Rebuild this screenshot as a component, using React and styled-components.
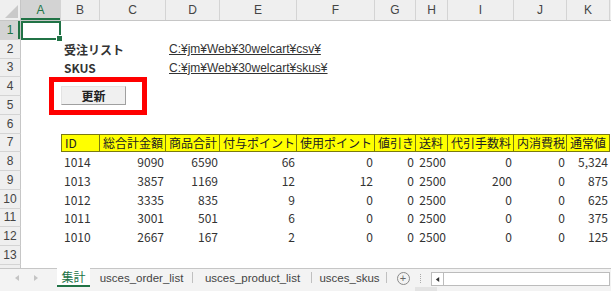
import styled, { createGlobalStyle } from "styled-components";

const COLS = [40, 39, 66, 54, 77, 78, 41, 32, 66, 53, 43];
const LETTERS = "ABCDEFGHIJK".split("");
const ROW_H = 18.75;
const TEMPLATE = `21px ${COLS.map((c) => c + "px").join(" ")} 1fr`;

const HEADERS = ["ID", "総合計金額", "商品合計", "付与ポイント", "使用ポイント", "値引き", "送料", "代引手数料", "内消費税", "通常値"];
const DATA = [
  ["1014", "9090", "6590", "66", "0", "0", "2500", "0", "0", "5,324"],
  ["1013", "3857", "1169", "12", "12", "0", "2500", "200", "0", "875"],
  ["1012", "3335", "835", "9", "0", "0", "2500", "0", "0", "625"],
  ["1011", "3001", "501", "6", "0", "0", "2500", "0", "0", "375"],
  ["1010", "2667", "167", "2", "0", "0", "2500", "0", "0", "125"],
];

const GlobalStyle = createGlobalStyle`
  html, body { margin: 0; padding: 0; background: #fff; }
  body {
    width: 611px;
    height: 291px;
    overflow: hidden;
    font-family: "Noto Sans CJK JP", "Noto Sans", sans-serif;
  }
`;

const Window = styled.div`
  display: flex;
  flex-direction: column;
  width: 611px;
  height: 291px;
  overflow: hidden;
`;

const Sheet = styled.div`
  position: relative;
  height: 268px;
  overflow: hidden;
`;

const ColHeaderRow = styled.div`
  display: grid;
  grid-template-columns: ${TEMPLATE};
  height: 21px;
  background: #efefef;
  border-bottom: 1px solid #c6c6c6;
  box-sizing: border-box;
`;

const Corner = styled.div`
  position: relative;
  background: #efefef;
  border-right: 1px solid #c6c6c6;
  &::after {
    content: "";
    position: absolute;
    right: 2px;
    bottom: 2px;
    border-left: 13px solid transparent;
    border-bottom: 13px solid #c9c9c9;
  }
`;

const ColLetter = styled.div`
  display: flex;
  align-items: center;
  justify-content: center;
  font-family: "Liberation Sans", sans-serif;
  font-size: 12px;
  color: ${(p) => (p.$active ? "#217346" : "#444")};
  background: ${(p) => (p.$active ? "#d3d3d3" : "transparent")};
  border-right: 1px solid #d4d4d4;
  box-shadow: ${(p) => (p.$active ? "inset 0 -2px 0 #217346" : "none")};
`;

const Row = styled.div`
  display: grid;
  grid-template-columns: ${TEMPLATE};
  height: ${ROW_H}px;
`;

const RowNum = styled.div`
  display: flex;
  align-items: center;
  justify-content: center;
  font-family: "Liberation Sans", sans-serif;
  font-size: 12px;
  color: ${(p) => (p.$active ? "#217346" : "#444")};
  background: ${(p) => (p.$active ? "#d3d3d3" : "#efefef")};
  border-bottom: 1px solid #d4d4d4;
  border-right: 1px solid #c6c6c6;
  box-shadow: ${(p) => (p.$active ? "inset -2px 0 0 #217346" : "none")};
  box-sizing: border-box;
`;

const Cell = styled.div`
  position: relative;
  display: flex;
  align-items: center;
  justify-content: ${(p) => (p.$right ? "flex-end" : "flex-start")};
  padding: 0 2px 0 3px;
  font-size: 12px;
  color: #333;
  white-space: nowrap;
  overflow: visible;
  font-weight: ${(p) => (p.$bold ? 700 : 400)};
  box-sizing: border-box;
`;

const SelectedCell = styled(Cell)`
  border: 2px solid #217346;
  &::after {
    content: "";
    position: absolute;
    right: -4px;
    bottom: -4px;
    width: 5px;
    height: 5px;
    background: #217346;
    border: 1px solid #fff;
  }
`;

const HeadCell = styled(Cell)`
  background: #ffff00;
  color: #222;
  border-top: 1px solid #7a7a10;
  border-bottom: 1px solid #7a7a10;
  border-right: 1px solid #7a7a10;
  border-left: ${(p) => (p.$first ? "1px solid #7a7a10" : "none")};
  overflow: hidden;
`;

const PathLink = styled.span`
  color: #333;
  text-decoration: underline;
  font-family: "Liberation Sans", "Noto Sans CJK JP", sans-serif;
  font-size: 12px;
`;

const FormButton = styled.div`
  position: absolute;
  left: 61px;
  top: 86px;
  width: 65px;
  height: 19px;
  box-sizing: border-box;
  display: flex;
  align-items: center;
  justify-content: center;
  background: #f0f0f0;
  border: 1px solid #e3e3e3;
  border-right-color: #a0a0a0;
  border-bottom-color: #a0a0a0;
  font-size: 12px;
  font-weight: 700;
  color: #222;
`;

const Highlight = styled.div`
  position: absolute;
  left: 49px;
  top: 77px;
  width: 98px;
  height: 38px;
  box-sizing: border-box;
  border: 5px solid #ff0000;
`;

const TabBar = styled.div`
  display: flex;
  align-items: stretch;
  height: 19px;
  background: #f3f3f3;
  border-top: 1px solid #c6c6c6;
  box-sizing: border-box;
`;

const NavArrows = styled.div`
  display: flex;
  align-items: center;
  gap: 13px;
  width: 57px;
  padding-left: 14px;
  box-sizing: border-box;
`;

const Tab = styled.div`
  display: flex;
  align-items: center;
  justify-content: center;
  width: ${(p) => p.$w}px;
  margin-top: -1px;
  font-family: ${(p) => (p.$active ? '"Noto Sans CJK JP", sans-serif' : '"Liberation Sans", sans-serif')};
  font-size: ${(p) => (p.$active ? 12 : 11.5)}px;
  color: ${(p) => (p.$active ? "#217346" : "#444")};
  background: ${(p) => (p.$active ? "#fff" : "transparent")};
  border-bottom: ${(p) => (p.$active ? "2px solid #217346" : "none")};
  box-sizing: border-box;
  position: relative;
  &::after {
    content: "";
    display: ${(p) => (p.$sep ? "block" : "none")};
    position: absolute;
    right: 0;
    top: 4px;
    height: 11px;
    border-right: 1px solid #c0c0c0;
  }
`;

const AddSheet = styled.div`
  display: flex;
  align-items: center;
  justify-content: center;
  width: 44px;
  gap: 10px;
`;

const Plus = styled.div`
  width: 11px;
  height: 11px;
  border: 1px solid #8a8a8a;
  border-radius: 50%;
  display: flex;
  align-items: center;
  justify-content: center;
  font-family: "Liberation Sans", sans-serif;
  font-size: 11px;
  line-height: 1;
  color: #666;
`;

const Dots = styled.div`
  width: 1px;
  height: 9px;
  border-left: 1px dotted #aaa;
`;

const HScroll = styled.div`
  flex: 1;
  display: flex;
  margin: 3px 1px 1px 0;
  border: 1px solid #bcbcbc;
  background: #fff;
`;

const ScrollBtn = styled.div`
  width: 11px;
  display: flex;
  align-items: center;
  justify-content: center;
  border-right: 1px solid #bcbcbc;
`;

const StatusStrip = styled.div`
  flex: 1;
  display: flex;
  background: #f3f3f3;
`;

const StripBlock = styled.div`
  margin-left: 415px;
  width: 22px;
  background: #e3e3e3;
`;

function Arrow({ dir = "left", color = "#c4c4c4", size = 6 }) {
  const d = dir === "left" ? "M5 0 L5 6 L1 3 Z" : "M1 0 L1 6 L5 3 Z";
  return (
    <svg width={size} height={size} viewBox="0 0 6 6">
      <path d={d} fill={color} />
    </svg>
  );
}

function DataRow({ n, children, active }) {
  return (
    <Row>
      <RowNum $active={active}>{n}</RowNum>
      {children}
    </Row>
  );
}

export default function App() {
  return (
    <Window>
      <GlobalStyle />
      <Sheet>
        <ColHeaderRow>
          <Corner />
          {LETTERS.map((l) => (
            <ColLetter key={l} $active={l === "A"}>{l}</ColLetter>
          ))}
        </ColHeaderRow>
        <DataRow n={1} active>
          <SelectedCell />
        </DataRow>
        <DataRow n={2}>
          <Cell />
          <Cell $bold>受注リスト</Cell>
          <Cell />
          <Cell><PathLink>C:¥jm¥Web¥30welcart¥csv¥</PathLink></Cell>
        </DataRow>
        <DataRow n={3}>
          <Cell />
          <Cell $bold>SKUS</Cell>
          <Cell />
          <Cell><PathLink>C:¥jm¥Web¥30welcart¥skus¥</PathLink></Cell>
        </DataRow>
        <DataRow n={4} />
        <DataRow n={5} />
        <DataRow n={6} />
        <DataRow n={7}>
          <Cell />
          {HEADERS.map((h, i) => (
            <HeadCell key={h} $first={i === 0}>{h}</HeadCell>
          ))}
        </DataRow>
        {DATA.map((r, ri) => (
          <DataRow key={r[0]} n={8 + ri}>
            <Cell />
            {r.map((v, i) => (
              <Cell key={i} $right={i > 0}>{v}</Cell>
            ))}
          </DataRow>
        ))}
        <DataRow n={13} />
        <DataRow n={14} />
        <FormButton>更新</FormButton>
        <Highlight />
      </Sheet>
      <TabBar>
        <NavArrows>
          <Arrow dir="left" />
          <Arrow dir="right" />
        </NavArrows>
        <Tab $w={33} $active>集計</Tab>
        <Tab $w={103} $sep>usces_order_list</Tab>
        <Tab $w={119} $sep>usces_product_list</Tab>
        <Tab $w={75} $sep>usces_skus</Tab>
        <AddSheet>
          <Plus>+</Plus>
          <Dots />
        </AddSheet>
        <HScroll>
          <ScrollBtn>
            <Arrow dir="left" color="#333" size={5} />
          </ScrollBtn>
        </HScroll>
      </TabBar>
      <StatusStrip>
        <StripBlock />
      </StatusStrip>
    </Window>
  );
}
